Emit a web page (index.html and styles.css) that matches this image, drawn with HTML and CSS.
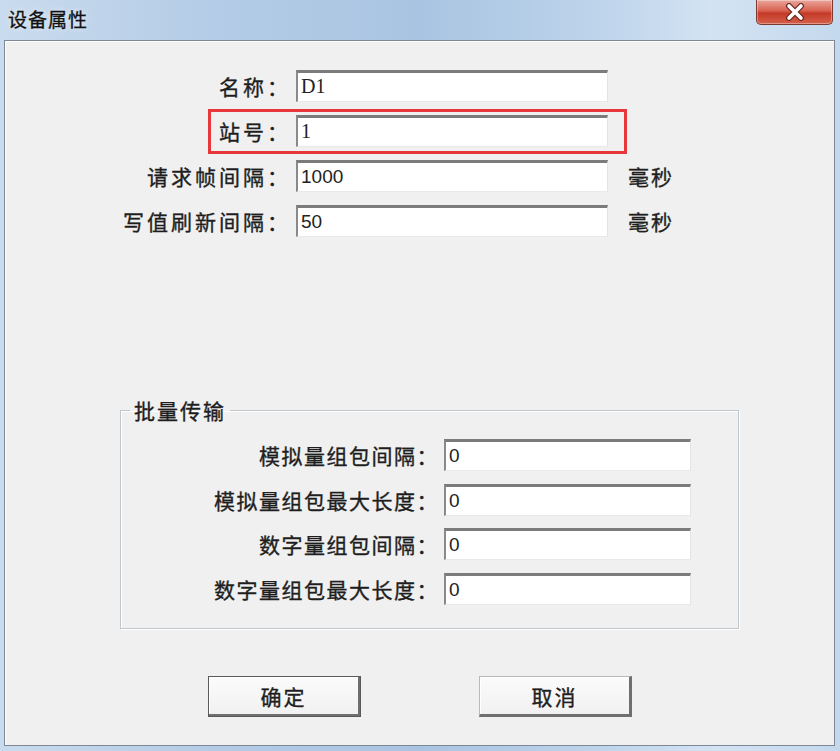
FILE: index.html
```html
<!DOCTYPE html>
<html lang="zh-CN">
<head>
    <meta charset="UTF-8">
    <title>设备属性</title>
    <link rel="stylesheet" href="styles.css">
</head>
<body>
    <div class="window">
        <div class="titlebar">
            <div class="title">设备属性</div>
            <div class="close-btn">
                <svg width="22" height="18" viewBox="0 0 22 18">
                    <path d="M5 3 L17 15 M17 3 L5 15" stroke="#6b2a22" stroke-width="6" stroke-linecap="round"/>
                    <path d="M5 3 L17 15 M17 3 L5 15" stroke="#ffffff" stroke-width="3.6" stroke-linecap="round"/>
                </svg>
            </div>
        </div>

        <div class="client">
            <div class="form">
                <div class="row">
                    <label class="label">名称：</label>
                    <div class="field serif">D1</div>
                </div>
                <div class="row">
                    <label class="label">站号：</label>
                    <div class="field serif">1</div>
                    <span class="highlight"></span>
                </div>
                <div class="row">
                    <label class="label">请求帧间隔：</label>
                    <div class="field">1000</div>
                    <span class="unit">毫秒</span>
                </div>
                <div class="row">
                    <label class="label">写值刷新间隔：</label>
                    <div class="field">50</div>
                    <span class="unit">毫秒</span>
                </div>
            </div>

            <fieldset class="group">
                <legend>批量传输</legend>
                <div class="row">
                    <label class="label">模拟量组包间隔：</label>
                    <div class="field">0</div>
                </div>
                <div class="row">
                    <label class="label">模拟量组包最大长度：</label>
                    <div class="field">0</div>
                </div>
                <div class="row">
                    <label class="label">数字量组包间隔：</label>
                    <div class="field">0</div>
                </div>
                <div class="row">
                    <label class="label">数字量组包最大长度：</label>
                    <div class="field">0</div>
                </div>
            </fieldset>

            <div class="buttons">
                <button class="btn default">确定</button>
                <button class="btn">取消</button>
            </div>
        </div>
    </div>
</body>
</html>
```

FILE: styles.css
```css
:root {
    --frame: #c6d9ee;
    --face: #f0f0f0;
    --text: #1e1e1e;
    --cjk: "Noto Sans CJK SC", "Liberation Sans", sans-serif;
}

* {
    margin: 0;
    padding: 0;
    box-sizing: border-box;
}

body {
    width: 840px;
    height: 751px;
    overflow: hidden;
    background: var(--frame);
    font-family: var(--cjk);
    color: var(--text);
}

.window {
    height: 751px;
    display: flex;
    flex-direction: column;
    background: linear-gradient(90deg, #c9dbee 0%, #b4cce6 25%, #a9c4e2 50%, #bcd3ea 70%, #d3e3f3 85%, #c4d8ed 100%);
}

/* Title bar */
.titlebar {
    height: 40px;
    display: flex;
    justify-content: space-between;
    align-items: flex-start;
}

.title {
    padding: 6px 0 0 8px;
    font-size: 19px;
    line-height: 26px;
    letter-spacing: 1px;
    color: #111;
    -webkit-text-stroke: 0.3px #111;
    text-shadow: 0 0 6px rgba(255,255,255,0.8);
}

.close-btn {
    width: 77px;
    height: 25px;
    margin-right: 7px;
    display: flex;
    justify-content: center;
    align-items: center;
    background: linear-gradient(180deg, #e9a79c 0%, #d9604f 45%, #c33a28 55%, #d5604a 100%);
    border: 1px solid #7a3a32;
    border-top: none;
    border-radius: 0 0 5px 5px;
    box-shadow: inset 0 0 0 1px rgba(255,255,255,0.35);
}

/* Client area */
.client {
    height: 706px;
    margin: 0 5px 0 4px;
    background: var(--face);
    border: 1px solid #7d8894;
    box-shadow: inset 1px 1px 0 #ffffff;
    padding-top: 29px;
}

.form {
    display: flex;
    flex-direction: column;
    gap: 13px;
}

.row {
    display: flex;
    align-items: center;
    height: 32px;
    position: relative;
}

.label {
    width: 286px;
    text-align: right;
    font-size: 21px;
    letter-spacing: 3px;
    line-height: 32px;
    white-space: nowrap;
    -webkit-text-stroke: 0.35px var(--text);
}

.field {
    width: 312px;
    height: 32px;
    margin-left: 5px;
    background: #ffffff;
    border-top: 3px solid #7b7b7b;
    border-left: 2px solid #8a8a8a;
    border-right: 1px solid #e4e4e4;
    border-bottom: 1px solid #e9e9e9;
    padding-left: 3px;
    font-family: "Liberation Sans", sans-serif;
    font-size: 19px;
    line-height: 27px;
    color: #222;
}

.field.serif {
    font-family: "Liberation Serif", serif;
    font-size: 20px;
}

.unit {
    margin-left: 20px;
    font-size: 21px;
    letter-spacing: 2px;
    -webkit-text-stroke: 0.35px var(--text);
}

/* Annotation box around the station row */
.highlight {
    position: absolute;
    left: 203px;
    top: -6px;
    width: 419px;
    height: 45px;
    border: 3px solid #e8363d;
    pointer-events: none;
}

/* Group box */
.group {
    margin: 160px 0 0 115px;
    width: 619px;
    height: 232px;
    border: 1px solid #bfc6cc;
    box-shadow: 1px 1px 0 #ffffff, inset 1px 1px 0 #ffffff;
    padding-top: 16px;
    display: flex;
    flex-direction: column;
    gap: 12.5px;
}

.group legend {
    margin-left: 9px;
    padding: 0 4px;
    font-size: 21px;
    letter-spacing: 2px;
    line-height: 26px;
    -webkit-text-stroke: 0.35px var(--text);
}

.group .label {
    width: 318px;
    letter-spacing: 1.5px;
}

.group .field {
    width: 247px;
}

/* Buttons */
.buttons {
    display: flex;
    gap: 118px;
    padding: 47px 0 0 203px;
}

.btn {
    width: 153px;
    height: 41px;
    font-family: var(--cjk);
    font-size: 21px;
    letter-spacing: 2px;
    color: var(--text);
    -webkit-text-stroke: 0.35px var(--text);
    background: linear-gradient(180deg, #fbfbfb 0%, #f1f1f1 100%);
    border: 1px solid #b9b9b9;
    border-right: 3px solid #6f6f6f;
    border-bottom: 3px solid #6f6f6f;
    box-shadow: inset 1px 1px 0 #ffffff;
}

.btn.default {
    outline: 1px solid #5a5a5a;
    outline-offset: -1px;
}
```
